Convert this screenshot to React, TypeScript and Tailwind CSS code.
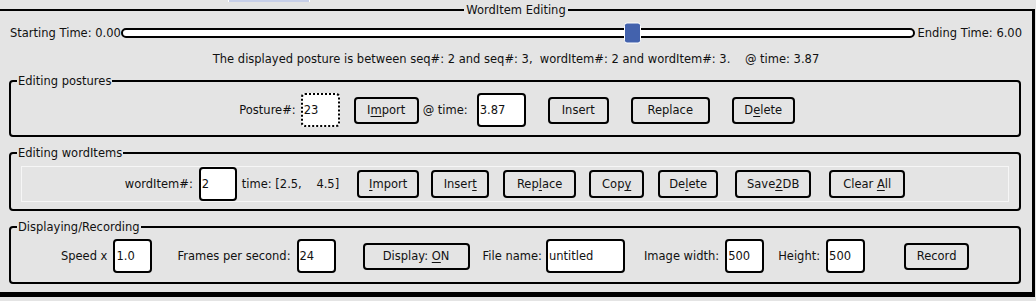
import React from "react";

function Btn({ className, children }: { className: string; children: React.ReactNode }) {
  return (
    <div
      className={
        "flex shrink-0 items-center justify-center rounded-[4px] border-2 border-black bg-[#e4e4e4] text-[11.5px] leading-[14px] " +
        className
      }
    >
      <span className="whitespace-pre">{children}</span>
    </div>
  );
}

function Field({ className, value, dotted }: { className: string; value: string; dotted?: boolean }) {
  return (
    <div
      className={
        "flex h-[34px] shrink-0 items-center rounded-[4px] border-2 border-black bg-white pl-[1px] text-[11.5px] leading-[14px] " +
        (dotted ? "border-dotted " : "border-solid ") +
        className
      }
    >
      {value}
    </div>
  );
}

function Label({ className, children }: { className?: string; children: React.ReactNode }) {
  return <span className={"shrink-0 whitespace-pre text-[11.5px] leading-[14px] " + (className ?? "")}>{children}</span>;
}

function Group({ title, className, children }: { title: string; className: string; children: React.ReactNode }) {
  return (
    <fieldset className={"ml-[9px] mr-[11px] rounded-[4px] border-2 border-black " + className}>
      <legend className="ml-[6px] px-[1px] text-[11.5px] leading-[14px]">{title}</legend>
      {children}
    </fieldset>
  );
}

function U({ children }: { children: React.ReactNode }) {
  return <span className="underline underline-offset-[2px]">{children}</span>;
}

export default function App() {
  const start = 0;
  const end = 6;
  const value = 3.87;
  const pct = ((value - start) / (end - start)) * 100;

  return (
    <div
      className="h-[301px] w-[1036px] overflow-hidden bg-[#e4e4e4] text-[#111]"
      style={{ fontFamily: '"DejaVu Sans", "Liberation Sans", sans-serif' }}
    >
      <div className="h-[3px]">
        <div className="ml-[228px] h-[2px] w-[82px] border-x border-white bg-[#c7cfe8]" />
      </div>
      <fieldset className="w-[1035px] border-t-2 border-r-[3px] border-b-[5px] border-l-0 border-black pb-[8px]">
        <legend className="mx-auto px-[2px] text-[11.5px] leading-[14px]">WordItem Editing</legend>

        <div className="mt-[6px] flex h-[20px] items-center pl-[10px] pr-[10px]">
          <Label>Starting Time: 0.00</Label>
          <div className="relative h-[10px] flex-1 rounded-full border-2 border-black bg-white">
            <div
              className="absolute top-1/2 h-[21px] w-[17px] -translate-y-1/2 rounded-[3px] border border-white bg-[#4362ad]"
              style={{ left: `calc(${pct}% - 8.5px)` }}
            />
          </div>
          <Label className="ml-[2px]">Ending Time: 6.00</Label>
        </div>

        <div className="mt-[9px] text-center text-[11.5px] leading-[14px] whitespace-pre">
          {"The displayed posture is between seq#: 2 and seq#: 3,  wordItem#: 2 and wordItem#: 3.    @ time: 3.87"}
        </div>

        <Group title="Editing postures" className="mt-[8px] pb-[8px]">
          <div className="mt-[5px] flex h-[34px] items-center justify-center pl-[4px]">
            <Label>Posture#:</Label>
            <Field className="ml-[5px] w-[39px]" value="23" dotted />
            <Btn className="ml-[14px] h-[27px] w-[65px]">
              I<U>m</U>port
            </Btn>
            <Label className="ml-[4px]">@ time:</Label>
            <Field className="ml-[9px] w-[49px]" value="3.87" />
            <Btn className="ml-[22px] h-[27px] w-[61px]">Insert</Btn>
            <Btn className="ml-[22px] h-[27px] w-[79px]">Replace</Btn>
            <Btn className="ml-[22px] h-[27px] w-[63px]">
              D<U>e</U>lete
            </Btn>
          </div>
        </Group>

        <Group title="Editing wordItems" className="mt-[9px] pb-[7px]">
          <div className="mx-[10px] mt-[6px] flex h-[36px] items-center justify-center border border-[#f6f6f6]">
            <Label>wordItem#:</Label>
            <Field className="ml-[6px] w-[38px]" value="2" />
            <Label className="ml-[5px]">{"time: [2.5,    4.5]"}</Label>
            <Btn className="ml-[18px] h-[28px] w-[62px]">
              <U>I</U>mport
            </Btn>
            <Btn className="ml-[12px] h-[28px] w-[58px]">
              Inser<U>t</U>
            </Btn>
            <Btn className="ml-[14px] h-[28px] w-[73px]">
              Rep<U>l</U>ace
            </Btn>
            <Btn className="ml-[13px] h-[28px] w-[55px]">
              Cop<U>y</U>
            </Btn>
            <Btn className="ml-[14px] h-[28px] w-[60px]">
              De<U>l</U>ete
            </Btn>
            <Btn className="ml-[17px] h-[28px] w-[76px]">
              Save<U>2</U>DB
            </Btn>
            <Btn className="ml-[18px] h-[28px] w-[76px]">
              {"Clear "}<U>A</U>ll
            </Btn>
          </div>
        </Group>

        <Group title="Displaying/Recording" className="mt-[9px] pb-[9px]">
          <div className="mt-[5px] flex h-[34px] items-center justify-center">
            <Label>Speed x</Label>
            <Field className="ml-[6px] w-[39px]" value="1.0" />
            <Label className="ml-[25px]">Frames per second:</Label>
            <Field className="ml-[6px] w-[39px]" value="24" />
            <Btn className="ml-[27px] h-[27px] w-[107px]">
              {"Display: "}<U>O</U>N
            </Btn>
            <Label className="ml-[13px]">File name:</Label>
            <Field className="ml-[4px] w-[79px]" value="untitled" />
            <Label className="ml-[19px]">Image width:</Label>
            <Field className="ml-[6px] w-[39px]" value="500" />
            <Label className="ml-[14px]">Height:</Label>
            <Field className="ml-[6px] w-[39px]" value="500" />
            <Btn className="ml-[39px] h-[27px] w-[65px]">Record</Btn>
          </div>
        </Group>
      </fieldset>
    </div>
  );
}
